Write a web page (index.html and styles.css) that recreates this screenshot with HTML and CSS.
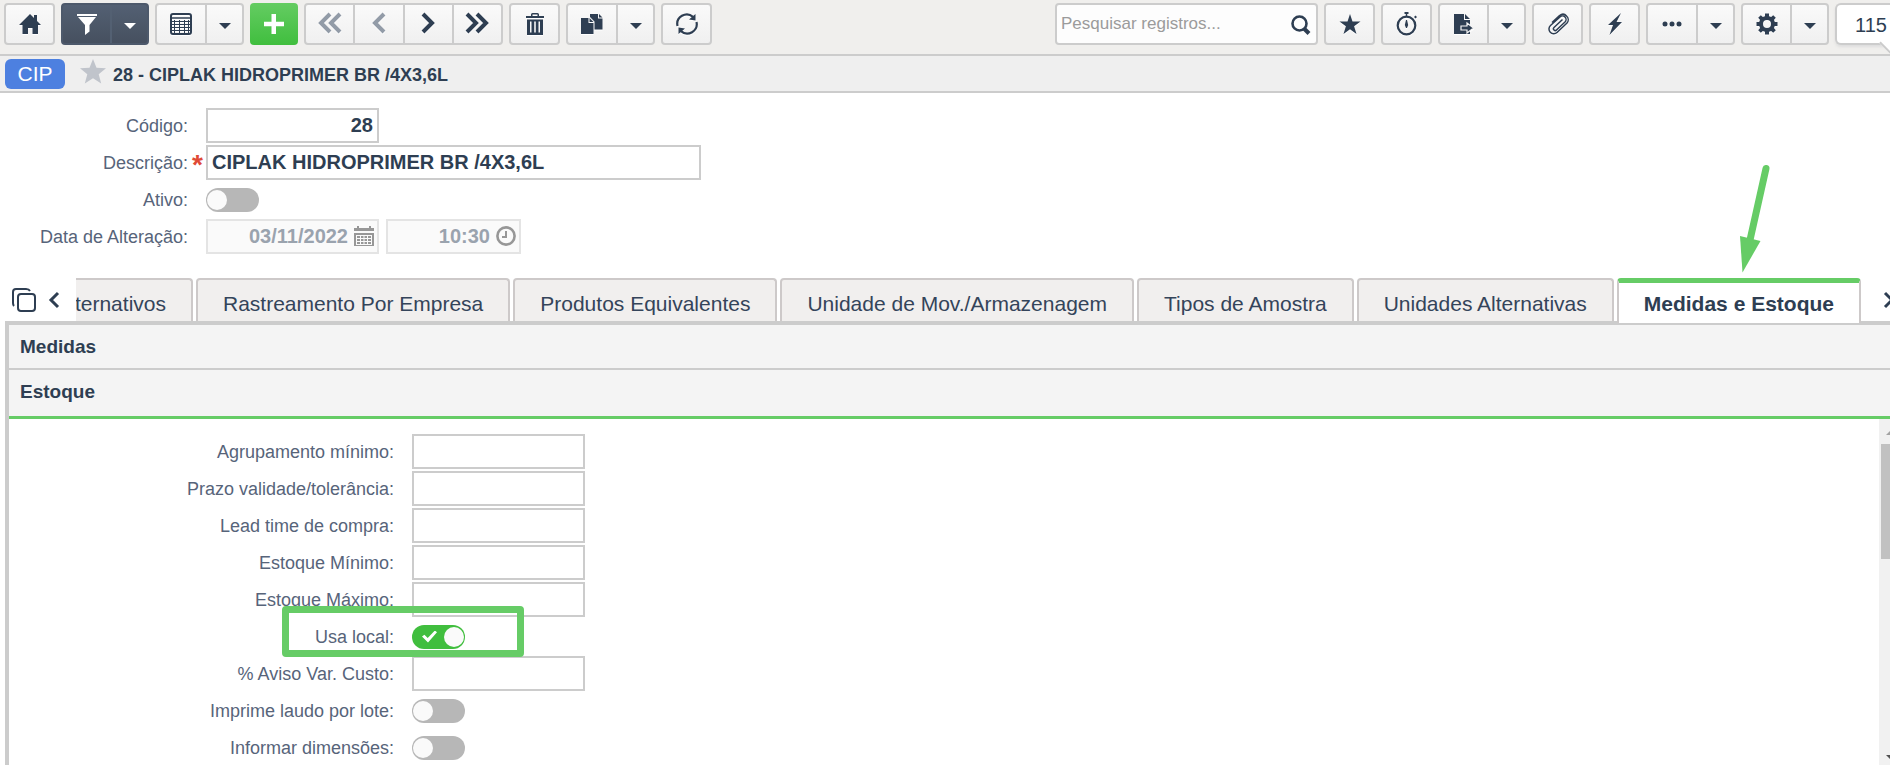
FILE: index.html
```
<!DOCTYPE html>
<html lang="pt-BR">
<head>
	<meta charset="UTF-8">
	<title>Produtos</title>
	<link rel="stylesheet" href="styles.css">
</head>
<body>
<header class="toolbar">
	<div class="group">
		<button class="btn" type="button" aria-label="Início">
			<svg class="icon" width="22" height="22" viewBox="0 0 22 22"><path d="M11 1 L15 5 V2 H18 V8 L22 12 H19 V21 H13.500 V15 H9 V21 H3.500 V12 H0 Z"/></svg>
		</button>
	</div>
	<div class="group dark">
		<button class="btn" type="button" aria-label="Filtro">
			<svg class="icon" width="20" height="22" viewBox="0 0 20 22"><path d="M0 1 H20 V3 H0 Z M1 4 H19 L12.500 12 V18.500 L8 22 V12 Z"/></svg>
		</button>
		<button class="btn caret" type="button" aria-label="Opções do filtro"></button>
	</div>
	<div class="group split">
		<button class="btn" type="button" aria-label="Grade">
			<svg class="icon line" width="22" height="22" viewBox="0 0 22 22"><rect x="1" y="1" width="20" height="20" rx="2"/><path d="M1 5 H21" stroke-width="1.500"/><path d="M2 8.500 H20 M2 11.500 H20 M2 14.500 H20 M2 17.500 H20 M4.500 7 V20 M9.500 7 V20 M14.500 7 V20 M18.500 7 V20" stroke-width="1"/></svg>
		</button>
		<button class="btn caret" type="button" aria-label="Opções da grade"></button>
	</div>
	<div class="group green">
		<button class="btn" type="button" aria-label="Novo">
			<svg class="icon" width="22" height="22" viewBox="0 0 22 22"><path d="M8.500 1 H13 V8.800 H21 V13.200 H13 V21 H8.500 V13.200 H1 V8.800 H8.500 Z"/></svg>
		</button>
	</div>
	<div class="group nav">
		<button class="btn off" type="button" aria-label="Primeiro">
			<svg class="icon chev" width="24" height="22" viewBox="0 0 24 22"><path d="M12 2 L3 11 L12 20 M22 2 L13 11 L22 20"/></svg>
		</button>
		<button class="btn off" type="button" aria-label="Anterior">
			<svg class="icon chev" width="16" height="22" viewBox="0 0 16 22"><path d="M13 2 L4 11 L13 20"/></svg>
		</button>
		<button class="btn" type="button" aria-label="Próximo">
			<svg class="icon chev" width="16" height="22" viewBox="0 0 16 22"><path d="M3 2 L12 11 L3 20"/></svg>
		</button>
		<button class="btn" type="button" aria-label="Último">
			<svg class="icon chev" width="24" height="22" viewBox="0 0 24 22"><path d="M2 2 L11 11 L2 20 M12 2 L21 11 L12 20"/></svg>
		</button>
	</div>
	<div class="group">
		<button class="btn" type="button" aria-label="Excluir">
			<svg class="icon" width="18" height="24" viewBox="0 0 18 24"><path d="M5 4 V2.500 Q5 1 6.500 1 H11.500 Q13 1 13 2.500 V4 H18 V6 H0 V4 Z M6.500 4 H11.500 V2.500 H6.500 Z M1 7.500 H17 V23 H1 Z M4 9.500 V20.500 H5.500 V9.500 Z M8.200 9.500 V20.500 H9.800 V9.500 Z M12.500 9.500 V20.500 H14 V9.500 Z" fill-rule="evenodd"/></svg>
		</button>
	</div>
	<div class="group split">
		<button class="btn" type="button" aria-label="Copiar">
			<svg class="icon" width="22" height="22" viewBox="0 0 22 22"><path d="M9 1 H17 V5.500 H21.500 V16.500 H13.500 V8.500 L9 4 Z M18 1 L21.500 4.500 H18 Z M0 5 H7.500 V10 H12.500 V21 H0 Z M8.500 5 L12.500 9 H8.500 Z"/></svg>
		</button>
		<button class="btn caret" type="button" aria-label="Opções de cópia"></button>
	</div>
	<div class="group">
		<button class="btn" type="button" aria-label="Atualizar">
			<svg class="icon" width="22" height="22" viewBox="0 0 22 22"><path d="M1.500 13 A9.500 9.500 0 0 1 17 3.800 M20.500 9 A9.500 9.500 0 0 1 5 18.200" fill="none" stroke="currentColor" stroke-width="2.200"/><path d="M19.500 1 V7.500 L13 6.500 Z M2.500 21 V14.500 L9 15.500 Z"/></svg>
		</button>
	</div>

	<div class="search">
		<input class="search-input" type="text" placeholder="Pesquisar registros..." aria-label="Pesquisar registros">
		<svg class="search-icon" width="20" height="20" viewBox="0 0 20 20"><circle cx="8.500" cy="8.500" r="7" fill="none" stroke="currentColor" stroke-width="2.600"/><path d="M13 13.500 L18 18.500" stroke="currentColor" stroke-width="4"/></svg>
	</div>
	<div class="group">
		<button class="btn" type="button" aria-label="Favoritos">
			<svg class="icon" width="22" height="22" viewBox="0 0 22 22"><path d="M11 1 L13.500 8.600 H21.500 L15.100 13.300 L17.500 21 L11 16.300 L4.500 21 L6.900 13.300 L0.500 8.600 H8.500 Z"/></svg>
		</button>
	</div>
	<div class="group">
		<button class="btn" type="button" aria-label="Cronômetro">
			<svg class="icon" width="22" height="26" viewBox="0 0 22 26"><circle cx="10.500" cy="14.500" r="8.800" fill="none" stroke="currentColor" stroke-width="2.200"/><path d="M8.500 1 H12.500 V3 H8.500 Z M9.800 3 H11.200 V6 H9.800 Z M18 6 L19.500 4.500 L21 6 L19.500 7.500 Z M10 9 H11 L12.200 14 L11 17 H10 L8.800 14 Z"/></svg>
		</button>
	</div>
	<div class="group split narrow">
		<button class="btn" type="button" aria-label="Exportar">
			<svg class="icon" width="22" height="22" viewBox="0 0 22 22"><path d="M1 1 H11 V7 H17 V21 H1 Z M12 1 L17 6 H12 Z"/><path d="M8 13 H14 V10 L20.500 15 L14 20 V17 H8 Z" stroke="#f5f5f5" stroke-width="1.200"/></svg>
		</button>
		<button class="btn caret" type="button" aria-label="Opções de exportação"></button>
	</div>
	<div class="group">
		<button class="btn" type="button" aria-label="Anexos">
			<svg class="icon line" width="24" height="22" viewBox="0 0 24 22"><path d="M16.500 6.500 L8 14.500 A1.500 1.500 0 0 0 10.500 17 L19 9 A3.500 3.500 0 0 0 14 4 L4.500 12.500 A4.500 4.500 0 0 0 11 19.500 L21 10 A5 5 0 0 0 20.500 3 Q17.500 -0.500 13.500 2.500 L6 9.500" stroke-width="1.500"/></svg>
		</button>
	</div>
	<div class="group">
		<button class="btn" type="button" aria-label="Ações">
			<svg class="icon" width="16" height="22" viewBox="0 0 16 22"><path d="M14 0 L9.500 9 H15 L2.500 22 L6 12 H1 Z"/></svg>
		</button>
	</div>
	<div class="group split">
		<button class="btn" type="button" aria-label="Mais">
			<svg class="icon" width="20" height="6" viewBox="0 0 20 6"><circle cx="3" cy="3" r="2.500"/><circle cx="10" cy="3" r="2.500"/><circle cx="17" cy="3" r="2.500"/></svg>
		</button>
		<button class="btn caret" type="button" aria-label="Mais opções"></button>
	</div>
	<div class="group split narrow">
		<button class="btn" type="button" aria-label="Configurações">
			<svg class="icon" width="22" height="22" viewBox="0 0 22 22"><circle cx="11" cy="11" r="6" fill="none" stroke="currentColor" stroke-width="4"/><path d="M9 0.500 H13 V5 H9 Z M9 17 H13 V21.500 H9 Z M0.500 9 H5 V13 H0.500 Z M17 9 H21.500 V13 H17 Z M2.200 4.800 L4.800 2.200 L8 5 L5 8 Z M17.200 2.200 L19.800 4.800 L17 8 L14 5 Z M2.200 17.200 L4.800 19.800 L8 17 L5 14 Z M17.200 19.800 L19.800 17.200 L17 14 L14 17 Z"/></svg>
		</button>
		<button class="btn caret" type="button" aria-label="Opções de configuração"></button>
	</div>
	<div class="counter">115</div>
</header>

<div class="titlebar">
	<span class="badge">CIP</span>
	<svg class="fav" width="26" height="25" viewBox="0 0 26 25"><path d="M13 0 L16.500 8.800 L26 9.300 L18.700 15.300 L21.200 24.500 L13 19.300 L4.800 24.500 L7.300 15.300 L0 9.300 L9.500 8.800 Z"/></svg>
	<h1 class="title">28 - CIPLAK HIDROPRIMER BR /4X3,6L</h1>
</div>

<form class="form">
	<div class="row">
		<label class="label" for="codigo">Código:</label>
		<input class="field right" id="codigo" type="text" value="28">
	</div>
	<div class="row">
		<label class="label required" for="descricao">Descrição:</label>
		<input class="field wide" id="descricao" type="text" value="CIPLAK HIDROPRIMER BR /4X3,6L">
	</div>
	<div class="row">
		<label class="label" for="ativo">Ativo:</label>
		<input class="switch" id="ativo" type="checkbox">
	</div>
	<div class="row">
		<label class="label" for="data">Data de Alteração:</label>
		<div class="pick">
			<input class="field right readonly" id="data" type="text" value="03/11/2022" readonly>
			<svg class="pick-icon" width="20" height="20" viewBox="0 0 20 20"><path d="M0 2 H3 V0 H5 V2 H15 V0 H17 V2 H20 V5 H0 Z M0 7 H20 V20 H0 Z" fill="currentColor"/><path d="M2 9.500 H18 M2 12.500 H18 M2 15.500 H18 M2 18.500 H18 M2.500 9 V19 M6.500 9 V19 M10 9 V19 M13.500 9 V19 M17.500 9 V19" stroke="#fafafa"/></svg>
		</div>
		<div class="pick time">
			<input class="field right readonly" type="text" value="10:30" aria-label="Hora de alteração" readonly>
			<svg class="pick-icon" width="20" height="20" viewBox="0 0 20 20" fill="none" stroke="currentColor"><circle cx="10" cy="10" r="8.600" stroke-width="2.600"/><path d="M10 5 V11 H6" stroke-width="2"/></svg>
		</div>
	</div>
</form>

<div class="tabbar">
	<div class="tabtools">
		<button class="tool" type="button" aria-label="Abas em janela">
			<svg width="24" height="24" viewBox="0 0 24 24" fill="none" stroke="currentColor" stroke-width="2"><rect x="6" y="6" width="17" height="17" rx="3"/><path d="M2 18 Q1 17 1 15 V4 Q1 1 4 1 H14 Q17 1 18 3"/></svg>
		</button>
		<button class="tool" type="button" aria-label="Aba anterior">
			<svg width="12" height="18" viewBox="0 0 12 18" fill="none" stroke="currentColor" stroke-width="3"><path d="M10 2 L3 9 L10 16"/></svg>
		</button>
	</div>
	<nav class="tabs">
		<a class="tab" href="#">Alternativos</a>
		<a class="tab" href="#">Rastreamento Por Empresa</a>
		<a class="tab" href="#">Produtos Equivalentes</a>
		<a class="tab" href="#">Unidade de Mov./Armazenagem</a>
		<a class="tab" href="#">Tipos de Amostra</a>
		<a class="tab" href="#">Unidades Alternativas</a>
		<a class="tab active" href="#">Medidas e Estoque</a>
	</nav>
	<button class="next" type="button" aria-label="Próxima aba">
		<svg width="12" height="18" viewBox="0 0 12 18" fill="none" stroke="currentColor" stroke-width="3"><path d="M2 2 L9 9 L2 16"/></svg>
	</button>
	<svg class="arrow" width="33" height="110" viewBox="0 0 33 110"><path d="M28 5.500 L12 77" stroke="#66cc66" stroke-width="7" stroke-linecap="round"/><path d="M2 73 L22.500 78 L4.500 109.500 Z" fill="#66cc66"/></svg>
</div>

<main class="panel">
	<h2 class="section">Medidas</h2>
	<h2 class="section open">Estoque</h2>
	<div class="body">
		<form class="stock">
			<div class="row">
				<label class="label" for="agrupamento">Agrupamento mínimo:</label>
				<input class="field" id="agrupamento" type="text">
			</div>
			<div class="row">
				<label class="label" for="prazo">Prazo validade/tolerância:</label>
				<input class="field" id="prazo" type="text">
			</div>
			<div class="row">
				<label class="label" for="lead">Lead time de compra:</label>
				<input class="field" id="lead" type="text">
			</div>
			<div class="row">
				<label class="label" for="minimo">Estoque Mínimo:</label>
				<input class="field" id="minimo" type="text">
			</div>
			<div class="row">
				<label class="label" for="maximo">Estoque Máximo:</label>
				<input class="field" id="maximo" type="text">
			</div>
			<div class="row marked">
				<label class="label" for="local">Usa local:</label>
				<input class="switch" id="local" type="checkbox" checked>
			</div>
			<div class="row">
				<label class="label" for="custo">% Aviso Var. Custo:</label>
				<input class="field" id="custo" type="text">
			</div>
			<div class="row">
				<label class="label" for="laudo">Imprime laudo por lote:</label>
				<input class="switch" id="laudo" type="checkbox">
			</div>
			<div class="row">
				<label class="label" for="dimensoes">Informar dimensões:</label>
				<input class="switch" id="dimensoes" type="checkbox">
			</div>
		</form>
		<div class="scroll">
			<svg class="scroll-arrow up" width="8" height="4" viewBox="0 0 8 4"><path d="M0 4 L4 0 L8 4 Z"/></svg>
			<div class="thumb"></div>
			<svg class="scroll-arrow down" width="8" height="4" viewBox="0 0 8 4"><path d="M0 0 H8 L4 4 Z"/></svg>
		</div>
	</div>
</main>
</body>
</html>
```

FILE: styles.css
```
*, *::before, *::after{
	box-sizing: border-box;
	margin: 0;
	padding: 0;
}
body{
	display: flex;
	flex-direction: column;
	height: 100vh;
	overflow: hidden;
	background: #fff;
	color: #2e3e52;
	font-family: "Liberation Sans", Arial, sans-serif;
	font-size: 18px;
}
button, input{
	font-family: inherit;
	color: inherit;
}

/* toolbar */
.toolbar{
	display: flex;
	flex-shrink: 0;
	gap: 6px;
	height: 56px;
	padding: 3px 0 0 4px;
	background: #f0efed;
	border-bottom: 2px solid #ccc;
}
.group{
	display: flex;
	flex-shrink: 0;
	width: 51px;
	height: 42px;
	border: 2px solid #ccc;
	border-radius: 4px;
	background: linear-gradient(#fafafa, #f0f0f0);
}
.split{
	width: 89px;
}
.narrow{
	width: 88px;
}
.nav{
	width: 199px;
}
.btn{
	display: flex;
	flex: 1;
	align-items: center;
	justify-content: center;
	border: 0;
	background: none;
}
.btn + .btn{
	border-left: 2px solid #ccc;
}
.btn.caret{
	flex: 0 0 37px;
}
.caret::before{
	content: "";
	margin-top: 3px;
	border: 6px solid transparent;
	border-top-color: #2e3e52;
	border-bottom: 0;
}
.icon{
	fill: currentColor;
	filter: drop-shadow(0 1px 0 #fff);
}
.line, .chev{
	fill: none;
	stroke: currentColor;
	stroke-width: 2;
}
.chev{
	stroke-width: 4;
	margin-bottom: 2px;
}
.off{
	color: #929ba7;
}
.dark{
	width: 88px;
	color: #fff;
	border-color: #4d596b;
	background: linear-gradient(#536073, #46505f);
}
.dark .btn + .btn{
	border-left-color: #536072;
}
.dark .caret::before{
	border-top-color: #fff;
}
.dark .icon, .green .icon{
	filter: none;
}
.green{
	width: 48px;
	color: #fff;
	border: 0;
	background: linear-gradient(#64cc62, #40be3e);
}
.search{
	display: flex;
	align-items: center;
	width: 263px;
	height: 42px;
	margin-left: auto;
	padding: 0 5px 0 4px;
	border: 2px solid #ccc;
	border-radius: 4px;
	background: #fdfdfd;
}
.search-input{
	flex: 1;
	min-width: 0;
	border: 0;
	outline: 0;
	background: none;
	font-size: 17px;
}
.search-input::placeholder{
	color: #9b9b9b;
}
.search-icon{
	margin-top: 2px;
}
.counter{
	position: relative;
	width: 55px;
	height: 42px;
	padding-left: 18px;
	border: 2px solid #ccc;
	border-right: 0;
	border-radius: 6px 0 0 6px;
	background: #fff;
	box-shadow: 0 2px 3px #ddd;
	font-size: 20px;
	line-height: 40px;
}
.counter::after{
	content: "";
	position: absolute;
	right: -11px;
	bottom: -9px;
	width: 18px;
	height: 18px;
	border: 2px solid #ccc;
	border-width: 0 0 2px 2px;
	background: #fff;
	transform: rotate(-45deg);
}

/* record title */
.titlebar{
	display: flex;
	flex-shrink: 0;
	align-items: center;
	height: 37px;
	padding-left: 5px;
	border-bottom: 2px solid #ccc;
	background: #efefef;
}
.badge{
	width: 60px;
	height: 30px;
	border-radius: 6px;
	background: #4d80e0;
	color: #fff;
	font-size: 21px;
	line-height: 30px;
	text-align: center;
}
.fav{
	margin: 0 7px 4px 15px;
	fill: #c0c4cb;
}
.title{
	padding-top: 3px;
	font-size: 18px;
}

/* forms */
.form{
	padding: 15px 0 24px;
}
.row{
	display: flex;
	align-items: center;
	height: 35px;
	margin-bottom: 2px;
}
.row:last-child{
	margin-bottom: 0;
}
.label{
	position: relative;
	width: 188px;
	margin-right: 18px;
	padding-top: 2px;
	color: #57647a;
	text-align: right;
}
.required::after{
	content: "*";
	position: absolute;
	left: 192px;
	top: 0;
	color: #e04a36;
	font-size: 28px;
	font-weight: bold;
	line-height: 28px;
}
.field{
	width: 173px;
	height: 35px;
	padding: 0 4px;
	border: 2px solid #ccc;
	background: #fff;
	font-size: 20px;
	font-weight: bold;
}
.wide{
	width: 495px;
}
.right{
	text-align: right;
}
.pick{
	position: relative;
	width: 173px;
	margin-right: 7px;
	color: #979797;
}
.time{
	width: 135px;
}
.readonly{
	width: 100%;
	padding-right: 29px;
	border-color: #e4e4e4;
	background: #fafafa;
	color: #9aa3ae;
}
.pick-icon{
	position: absolute;
	right: 5px;
	top: 7px;
}
.switch{
	appearance: none;
	display: flex;
	align-items: center;
	justify-content: space-between;
	width: 53px;
	height: 24px;
	padding: 0 1px;
	border-radius: 12px;
	background: #b7b7b7;
}
.switch::after{
	content: "";
	width: 20px;
	height: 20px;
	border-radius: 50%;
	background: #fafafa;
}
.switch:checked{
	background: #40be3e;
}
.switch:checked::before{
	content: "";
	width: 15px;
	height: 12px;
	margin-left: 9px;
	background: #fff;
	clip-path: polygon(0 50%, 16% 36%, 38% 62%, 86% 0, 100% 14%, 40% 100%);
}

/* tabs */
.tabbar{
	position: relative;
	display: flex;
	flex-shrink: 0;
	height: 45px;
	margin-left: 5px;
}
.tabtools{
	display: flex;
	align-items: center;
	width: 71px;
	gap: 12px;
	padding-left: 7px;
	border-bottom: 2px solid #ccc;
}
.tool, .next{
	display: flex;
	border: 0;
	background: none;
}
.tabs{
	display: flex;
	flex: 1;
	justify-content: flex-end;
	gap: 3px;
	min-width: 0;
	overflow: hidden;
	background: linear-gradient(#ccc, #ccc) bottom / 100% 2px no-repeat;
}
.tab{
	flex-shrink: 0;
	height: 43px;
	padding: 0 25px;
	border: 2px solid #cdc9c9;
	border-bottom: 0;
	border-radius: 4px 4px 0 0;
	background: #f1efee;
	color: #34445a;
	font-size: 21px;
	line-height: 48px;
	text-decoration: none;
	white-space: nowrap;
}
.tab.active{
	height: 45px;
	border-top: 5px solid #66cc66;
	background: #fff;
	color: #2e3e52;
	font-weight: bold;
	line-height: 42px;
}
.next{
	width: 29px;
	align-items: center;
	padding-left: 22px;
	overflow: hidden;
	border-bottom: 2px solid #ccc;
}
.next svg{
	flex-shrink: 0;
}
.arrow{
	position: absolute;
	right: 119px;
	bottom: 50px;
}

/* accordion panel */
.panel{
	display: flex;
	flex: 1;
	flex-direction: column;
	min-height: 0;
	margin-left: 5px;
	border-top: 2px solid #ccc;
	border-left: 4px solid #ccc;
}
.section{
	flex-shrink: 0;
	padding-left: 11px;
	border-bottom: 2px solid #ccc;
	background: #f4f4f4;
	font-size: 19px;
	line-height: 43px;
}
.section.open{
	padding-bottom: 3px;
	border-bottom: 3px solid #66cc66;
}
.body{
	display: flex;
	flex: 1;
	min-height: 0;
}
.stock{
	flex: 1;
	padding-top: 15px;
}
.stock .label{
	width: 385px;
}
.marked{
	position: relative;
}
.marked::after{
	content: "";
	position: absolute;
	left: 273px;
	top: -13px;
	width: 242px;
	height: 51px;
	border: 7px solid #66cc66;
	border-radius: 4px;
}
.scroll{
	display: flex;
	flex-direction: column;
	width: 11px;
	padding: 12px 0 6px 2px;
	overflow: hidden;
	background: #f1f1f1;
}
.scroll-arrow{
	flex-shrink: 0;
	margin-left: 5px;
	fill: #a3a3a3;
}
.down{
	margin-top: auto;
	fill: #505050;
}
.thumb{
	height: 115px;
	margin-top: 9px;
	background: #c1c1c1;
}
```
